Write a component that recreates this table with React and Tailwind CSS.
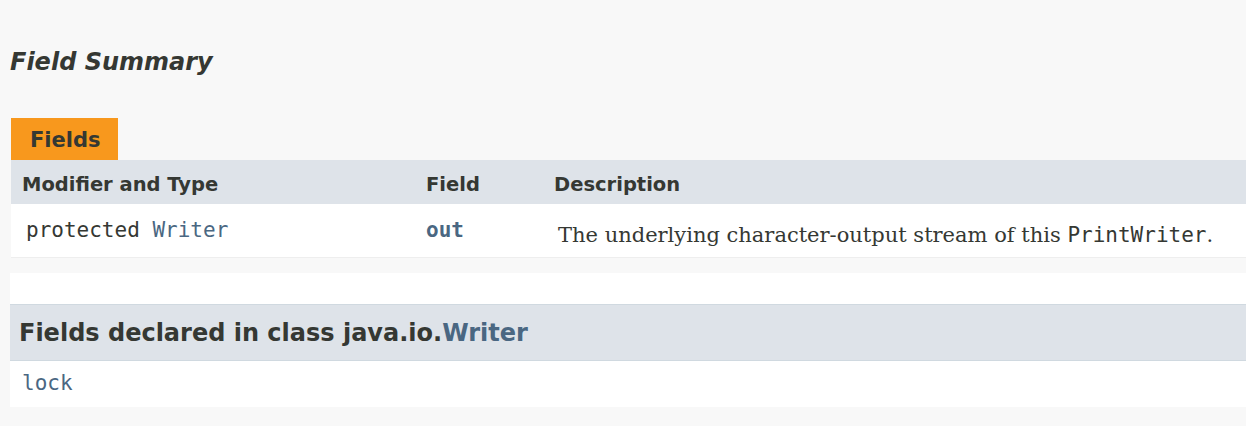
export default function App() {
  const sans = { fontFamily: '"DejaVu Sans", sans-serif' };
  const mono = { fontFamily: '"DejaVu Sans Mono", monospace' };
  return (
    <div
      className="min-h-[426px] w-[1246px] overflow-hidden bg-[#f8f8f8] text-[#353833]"
      style={sans}
    >
      <div className="pl-[10px] pt-[47px]">
        <h3 className="text-[24px] font-bold italic leading-[30px]">Field Summary</h3>
      </div>

      <div className="mt-[41px] pl-[11px]">
        <div className="inline-flex h-[42px] items-center bg-[#f8981d] pl-[19px] pr-[17px] pt-[4px] text-[21px] font-bold">
          Fields
        </div>
        <div className="grid grid-cols-[404px_128px_1fr]">
          <div className="flex h-[44px] items-center bg-[#dee3e9] pl-[11px] pt-[6px] text-[19.5px] font-bold">
            Modifier and Type
          </div>
          <div className="flex h-[44px] items-center bg-[#dee3e9] pl-[11px] pt-[6px] text-[19.5px] font-bold">
            Field
          </div>
          <div className="flex h-[44px] items-center bg-[#dee3e9] pl-[11px] pt-[6px] text-[19.5px] font-bold">
            Description
          </div>
          <div
            className="flex h-[54px] items-center border-b border-[#eeeeee] bg-white pt-[1px] pl-[15px] text-[21px]"
            style={mono}
          >
            protected&nbsp;<span className="text-[#4a6782]">Writer</span>
          </div>
          <div
            className="flex h-[54px] items-center border-b border-[#eeeeee] bg-white pt-[1px] pl-[11px] text-[21px] font-bold text-[#4a6782]"
            style={mono}
          >
            out
          </div>
          <div
            className="flex h-[54px] items-center border-b border-[#eeeeee] bg-white pl-[15px] pt-[10px] text-[21px]"
            style={{ fontFamily: '"DejaVu Serif", serif' }}
          >
            The underlying character-output stream of this&nbsp;
            <span style={mono}>PrintWriter</span>.
          </div>
        </div>
      </div>

      <div className="ml-[10px] mt-[15px] bg-white pt-[31px]">
        <div className="flex h-[57px] items-center border-y border-[#d0d9e0] bg-[#dee3e9] pl-[9px] text-[24px] font-bold">
          Fields declared in class java.io.<span className="text-[#4a6782]">Writer</span>
        </div>
        <div className="flex h-[46px] items-center pl-[12px] text-[21px] text-[#4a6782]" style={mono}>
          lock
        </div>
      </div>
    </div>
  );
}
